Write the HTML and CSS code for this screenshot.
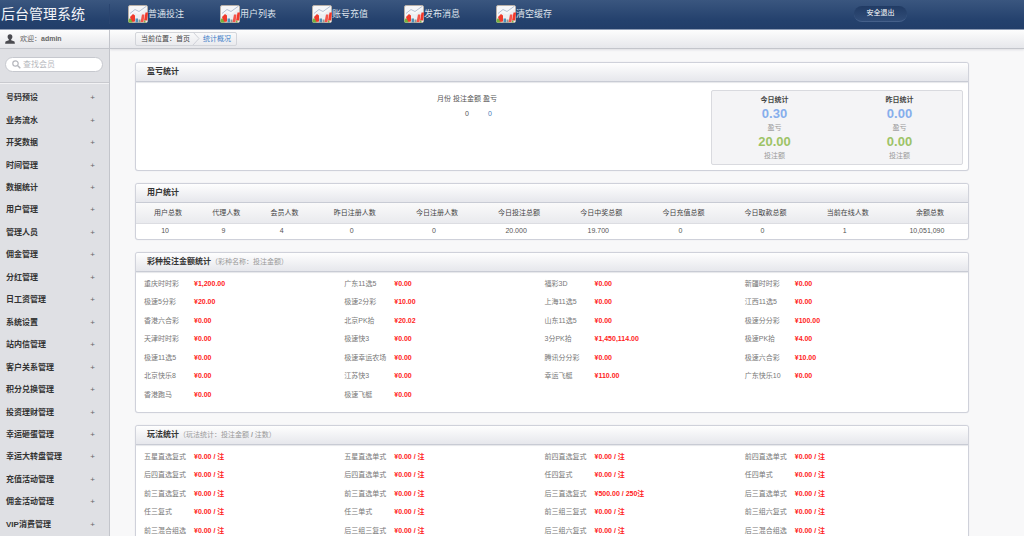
FILE: index.html
```
<!DOCTYPE html>
<html lang="zh-CN">
<head>
<meta charset="utf-8">
<title>后台管理系统</title>
<link rel="stylesheet" href="styles.css">
</head>
<body>
<svg class="defs" width="0" height="0" aria-hidden="true">
  <symbol id="chart" viewBox="0 0 20 18">
    <rect x="0.5" y="0.5" width="19" height="17" rx="1.5" fill="#f6f6f8" stroke="#b9b0a8"/>
    <path d="M1 12 6 7.500 11 9.500 19 3.500V17H1Z" fill="#eceef2"/>
    <path d="M2 8.500 7 4.500 11 6.500 18 1.500" fill="none" stroke="#a3b2c8" stroke-width="0.800"/>
    <path d="M0.500 17.500v-2.500l1.500-2 2.500 2.500v2z" fill="#74b03f"/>
    <path d="M3 14.500 2 12 5 9l2 1.500v6l-2.500.5z" fill="#f03a2a"/>
    <path d="M7.500 17.500v-4h2.500v4z" fill="#4f8fb5"/>
    <path d="M10.500 17.500v-3h2v3z" fill="#8d9a94"/>
    <path d="M12.500 17 14 9.500h2.500L15.500 17z" fill="#f4554a"/>
    <path d="M16 15.500 17.500 7.500H20L19 15.500z" fill="#f2382b"/>
    <path d="M16 17.500v-2h1.500v2z" fill="#7fb04a"/>
  </symbol>
</svg>
<div class="app">
  <header class="topbar">
    <h1 class="brand">后台管理系统</h1>
    <nav class="topnav">
      <a href="#bet"><svg class="nav-icon"><use href="#chart"/></svg>普通投注</a>
      <a href="#users"><svg class="nav-icon"><use href="#chart"/></svg>用户列表</a>
      <a href="#recharge"><svg class="nav-icon"><use href="#chart"/></svg>账号充值</a>
      <a href="#message"><svg class="nav-icon"><use href="#chart"/></svg>发布消息</a>
      <a href="#cache"><svg class="nav-icon"><use href="#chart"/></svg>清空缓存</a>
    </nav>
    <button class="logout" type="button">安全退出</button>
  </header>

  <aside class="sidebar">
    <div class="userbar">
      <svg class="user-icon" viewBox="0 0 10 10"><path d="M5 0.300c1.600 0 2.400 1 2.400 2.500 0 1.100-.5 2-1.200 2.500v.9l3.300 1.300.4 2.200H.1l.4-2.200 3.300-1.300v-.9C3.100 4.800 2.600 3.900 2.600 2.800 2.600 1.300 3.400.3 5 .3z" fill="#4b4b50"/></svg>
      <span>欢迎：</span><b>admin</b>
    </div>
    <form class="search">
      <label class="search-box">
        <svg class="search-icon" viewBox="0 0 9 9"><circle cx="3.500" cy="3.500" r="2.700" fill="none" stroke="#b4b6bc" stroke-width="1.200"/><path d="M5.500 5.500 8.300 8.300" stroke="#b4b6bc" stroke-width="1.500"/></svg>
        <input type="text" placeholder="查找会员" aria-label="查找会员">
      </label>
    </form>
    <nav class="menu">
      <button type="button">号码预设<i>+</i></button>
      <button type="button">业务流水<i>+</i></button>
      <button type="button">开奖数据<i>+</i></button>
      <button type="button">时间管理<i>+</i></button>
      <button type="button">数据统计<i>+</i></button>
      <button type="button">用户管理<i>+</i></button>
      <button type="button">管理人员<i>+</i></button>
      <button type="button">佣金管理<i>+</i></button>
      <button type="button">分红管理<i>+</i></button>
      <button type="button">日工资管理<i>+</i></button>
      <button type="button">系统设置<i>+</i></button>
      <button type="button">站内信管理<i>+</i></button>
      <button type="button">客户关系管理<i>+</i></button>
      <button type="button">积分兑换管理<i>+</i></button>
      <button type="button">投资理财管理<i>+</i></button>
      <button type="button">幸运砸蛋管理<i>+</i></button>
      <button type="button">幸运大转盘管理<i>+</i></button>
      <button type="button">充值活动管理<i>+</i></button>
      <button type="button">佣金活动管理<i>+</i></button>
      <button type="button">VIP消费管理<i>+</i></button>
    </nav>
  </aside>

  <main class="main">
    <div class="crumbbar">
      <nav class="crumbs">
        <span>当前位置：<a href="#home">首页</a></span>
        <svg class="crumb-arrow" viewBox="0 0 8 13"><path d="M1 0 7 6.500 1 13" fill="none" stroke="#cfd1d8"/></svg>
        <a class="current" href="#overview">统计概况</a>
      </nav>
    </div>

    <div class="content">
      <section class="panel">
        <h2>盈亏统计</h2>
        <div class="profit">
          <div class="monthly">
            <table>
              <thead><tr><th>月份</th><th>投注金额</th><th>盈亏</th></tr></thead>
              <tbody><tr><td></td><td>0</td><td class="link">0</td></tr></tbody>
            </table>
          </div>
          <div class="summary">
            <div class="day"><h3>今日统计</h3><strong class="blue">0.30</strong><span>盈亏</span><strong class="green">20.00</strong><span>投注额</span></div>
            <div class="day"><h3>昨日统计</h3><strong class="blue">0.00</strong><span>盈亏</span><strong class="green">0.00</strong><span>投注额</span></div>
          </div>
        </div>
      </section>

      <section class="panel">
        <h2>用户统计</h2>
        <table class="users">
          <thead><tr><th class="narrow">用户总数</th><th class="narrow">代理人数</th><th class="narrow">会员人数</th><th>昨日注册人数</th><th>今日注册人数</th><th>今日投注总额</th><th>今日中奖总额</th><th>今日充值总额</th><th>今日取款总额</th><th>当前在线人数</th><th>余额总数</th></tr></thead>
          <tbody><tr><td>10</td><td>9</td><td>4</td><td>0</td><td>0</td><td>20.000</td><td>19.700</td><td>0</td><td>0</td><td>1</td><td>10,051,090</td></tr></tbody>
        </table>
      </section>

      <section class="panel">
        <h2>彩种投注金额统计<small>（彩种名称：投注金额）</small></h2>
        <dl class="stats">
          <div><dt>重庆时时彩</dt><dd>¥1,200.00</dd></div>
          <div><dt>广东11选5</dt><dd>¥0.00</dd></div>
          <div><dt>福彩3D</dt><dd>¥0.00</dd></div>
          <div><dt>新疆时时彩</dt><dd>¥0.00</dd></div>
          <div><dt>极速5分彩</dt><dd>¥20.00</dd></div>
          <div><dt>极速2分彩</dt><dd>¥10.00</dd></div>
          <div><dt>上海11选5</dt><dd>¥0.00</dd></div>
          <div><dt>江西11选5</dt><dd>¥0.00</dd></div>
          <div><dt>香港六合彩</dt><dd>¥0.00</dd></div>
          <div><dt>北京PK拾</dt><dd>¥20.02</dd></div>
          <div><dt>山东11选5</dt><dd>¥0.00</dd></div>
          <div><dt>极速分分彩</dt><dd>¥100.00</dd></div>
          <div><dt>天津时时彩</dt><dd>¥0.00</dd></div>
          <div><dt>极速快3</dt><dd>¥0.00</dd></div>
          <div><dt>3分PK拾</dt><dd>¥1,450,114.00</dd></div>
          <div><dt>极速PK拾</dt><dd>¥4.00</dd></div>
          <div><dt>极速11选5</dt><dd>¥0.00</dd></div>
          <div><dt>极速幸运农场</dt><dd>¥0.00</dd></div>
          <div><dt>腾讯分分彩</dt><dd>¥0.00</dd></div>
          <div><dt>极速六合彩</dt><dd>¥10.00</dd></div>
          <div><dt>北京快乐8</dt><dd>¥0.00</dd></div>
          <div><dt>江苏快3</dt><dd>¥0.00</dd></div>
          <div><dt>幸运飞艇</dt><dd>¥110.00</dd></div>
          <div><dt>广东快乐10</dt><dd>¥0.00</dd></div>
          <div><dt>香港跑马</dt><dd>¥0.00</dd></div>
          <div><dt>极速飞艇</dt><dd>¥0.00</dd></div>
        </dl>
      </section>

      <section class="panel">
        <h2>玩法统计<small>（玩法统计：投注金额 <b>/</b> 注数）</small></h2>
        <dl class="stats">
          <div><dt>五星直选复式</dt><dd>¥0.00 / 注</dd></div>
          <div><dt>五星直选单式</dt><dd>¥0.00 / 注</dd></div>
          <div><dt>前四直选复式</dt><dd>¥0.00 / 注</dd></div>
          <div><dt>前四直选单式</dt><dd>¥0.00 / 注</dd></div>
          <div><dt>后四直选复式</dt><dd>¥0.00 / 注</dd></div>
          <div><dt>后四直选单式</dt><dd>¥0.00 / 注</dd></div>
          <div><dt>任四复式</dt><dd>¥0.00 / 注</dd></div>
          <div><dt>任四单式</dt><dd>¥0.00 / 注</dd></div>
          <div><dt>前三直选复式</dt><dd>¥0.00 / 注</dd></div>
          <div><dt>前三直选单式</dt><dd>¥0.00 / 注</dd></div>
          <div><dt>后三直选复式</dt><dd>¥500.00 / 250注</dd></div>
          <div><dt>后三直选单式</dt><dd>¥0.00 / 注</dd></div>
          <div><dt>任三复式</dt><dd>¥0.00 / 注</dd></div>
          <div><dt>任三单式</dt><dd>¥0.00 / 注</dd></div>
          <div><dt>前三组三复式</dt><dd>¥0.00 / 注</dd></div>
          <div><dt>前三组六复式</dt><dd>¥0.00 / 注</dd></div>
          <div><dt>前三混合组选</dt><dd>¥0.00 / 注</dd></div>
          <div><dt>后三组三复式</dt><dd>¥0.00 / 注</dd></div>
          <div><dt>后三组六复式</dt><dd>¥0.00 / 注</dd></div>
          <div><dt>后三混合组选</dt><dd>¥0.00 / 注</dd></div>
        </dl>
      </section>
    </div>
  </main>
</div>
</body>
</html>
```
FILE: styles.css
```
* { box-sizing: border-box; margin: 0; padding: 0; }
body, button, input {
  font-family: "Liberation Sans", "Noto Sans CJK SC", sans-serif;
  font-size: 7px;
  line-height: 10px;
  color: #555;
}
a { color: inherit; text-decoration: none; }
button { border: 0; background: none; cursor: pointer; }
table { border-collapse: collapse; }
.defs { display: block; }

.app {
  display: grid;
  grid-template: 30px 1fr / 110px 1fr;
  height: 100vh;
  overflow: hidden;
}

/* top bar */
.topbar {
  grid-column: 1 / -1;
  display: flex;
  align-items: center;
  padding-bottom: 2px;
  background: linear-gradient(#3a567f, #24416d 70%, #223e69);
  border-bottom: 1px solid #8f9db5;
}
.brand {
  width: 110px;
  padding-left: 1px;
  font-size: 14px;
  line-height: 20px;
  font-weight: 400;
  color: #f2f4f8;
  border-right: 1px solid #2a4570;
}
.topnav { display: flex; padding-left: 18px; }
.topnav a {
  display: flex;
  align-items: center;
  width: 92px;
  font-size: 9px;
  line-height: 18px;
  color: #dfe4ec;
}
.nav-icon { width: 20px; height: 18px; }
.logout {
  margin-left: auto;
  margin-right: 117px;
  width: 53px;
  height: 16px;
  border-radius: 8px;
  color: #fff;
  background: linear-gradient(#213b64, #304c77);
  border-bottom: 1px solid #45608a;
}

/* sidebar */
.sidebar {
  display: flex;
  flex-direction: column;
  min-height: 0;
  overflow: hidden;
  background: #dfe0e4;
  border-right: 1px solid #c3c5cb;
}
.userbar {
  flex: none;
  display: flex;
  align-items: center;
  height: 19px;
  padding-left: 5px;
  background: linear-gradient(#fdfdfd, #e5e6ea);
  border-bottom: 1px solid #c3c5cb;
  color: #666;
}
.user-icon { width: 10px; height: 10px; margin-right: 5px; }
.search {
  flex: none;
  height: 34px;
  padding: 8px 6px 0 5px;
  border-bottom: 1px solid #c9cacf;
}
.search-box {
  display: flex;
  align-items: center;
  height: 15px;
  padding-left: 6px;
  background: #fff;
  border: 1px solid #c6c8ce;
  border-radius: 8px;
}
.search-icon { flex: none; width: 9px; height: 9px; margin-right: 2px; }
.search input { flex: 1; min-width: 0; border: 0; outline: 0; background: none; font-size: 8px; }
.search input::placeholder { color: #b7b9be; }
.menu {
  flex: 1;
  display: flex;
  flex-direction: column;
  padding-top: 3px;
  border-top: 1px solid #f2f2f4;
}
.menu button {
  flex: 1;
  display: flex;
  align-items: center;
  justify-content: space-between;
  padding: 0 14px 0 6px;
  font-size: 8px;
  font-weight: 700;
  color: #333;
}
.menu i { font-style: normal; font-weight: 400; color: #666; }

/* main area */
.main { min-width: 0; min-height: 0; overflow: auto; scrollbar-width: none; background: #f8f8f9; }
.crumbbar {
  display: flex;
  align-items: center;
  height: 19px;
  padding: 0 25px 1px;
  background: linear-gradient(#fdfdfd, #e6e7eb);
  border-bottom: 1px solid #c3c5cb;
  box-shadow: 0 1px 2px #dddee2;
}
.crumbs {
  display: flex;
  align-items: center;
  height: 14px;
  padding: 0 5px;
  border: 1px solid #d3d5da;
  border-radius: 2px;
  color: #444;
}
.crumb-arrow { width: 8px; height: 13px; margin: 0 3px 0 2px; }
.current { color: #3f80c8; }
.content { display: grid; gap: 12px; padding: 13px 55px 12px 25px; }

.panel { background: #fff; border: 1px solid #cfd1da; border-radius: 3px; box-shadow: 0 0 1px #d5d6de; }
.panel h2 {
  display: flex;
  align-items: center;
  height: 19px;
  padding-left: 11px;
  font-size: 8px;
  color: #333;
  background: linear-gradient(#fefefe, #e6e7ec);
  border-bottom: 1px solid #c8cbd4;
  border-radius: 2px 2px 0 0;
  box-shadow: 0 1px 1px #e6e7ea;
}
.panel small { font-size: 7px; font-weight: 400; color: #999; }

.profit { display: flex; min-height: 88px; padding: 8px 5px 5px; }
.monthly { flex: 1; padding: 1px 0 0 82px; }
.monthly table { margin: 0 auto; }
.monthly th, .monthly td { height: 15px; padding: 0 1px; font-weight: 400; text-align: center; }
.monthly .link { color: #4a7ab8; }
.summary {
  width: 252px;
  display: grid;
  grid-template-columns: 1fr 1fr;
  padding-top: 3px;
  background: #f4f4f6;
  border: 1px solid #d9dadf;
  border-radius: 2px;
}
.day { display: flex; flex-direction: column; align-items: center; color: #999; }
.day h3 { font-size: 7px; line-height: 11px; color: #444; }
.day strong { font-size: 13px; line-height: 18px; }
.day span { line-height: 10px; }
.blue { color: #86aeec; }
.green { color: #9dc366; }

.users { width: 100%; table-layout: fixed; text-align: center; }
.users th { height: 20px; padding-left: 6px; font-weight: 400; color: #444; background: linear-gradient(#fafafa, #e9eaee); border-bottom: 1px solid #dcdde2; }
.users .narrow { width: 7%; }
.users td { height: 16px; }

.stats {
  display: grid;
  grid-template-columns: repeat(4, 1fr);
  grid-auto-rows: 19px 18px;
  padding: 2px 23px 8px 8px;
  color: #777;
}
.stats div { display: flex; align-items: center; white-space: nowrap; }
.stats dt { width: 50px; }
.stats dd { font-weight: 700; color: #f22; }
```
